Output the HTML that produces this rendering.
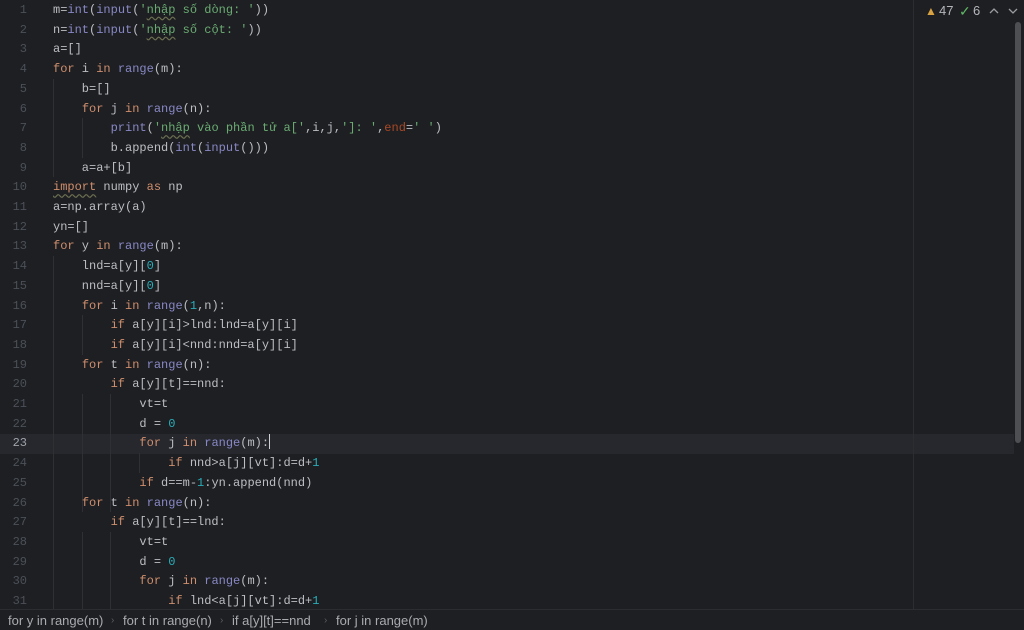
<!DOCTYPE html>
<html><head><meta charset="utf-8"><style>
html,body{margin:0;padding:0;width:1024px;height:630px;overflow:hidden;background:#1e1f22;}
body{position:relative;font-family:"Liberation Mono","DejaVu Sans Mono",monospace;font-size:12px;}
.cur{position:absolute;left:0;top:434px;width:1014px;height:19.7px;background:#26282e;}
.ln{position:absolute;left:0;top:1px;width:27px;text-align:right;color:#4b5059;line-height:19.7px;}
.ln div.c{color:#a1a3ab;}
.code{position:absolute;left:53px;top:1px;color:#bcbec4;line-height:19.7px;white-space:pre;}
.k{color:#cf8e6d}.b{color:#8888c6}.s{color:#6aab73}.n{color:#2aacb8}.p{color:#aa4926}
.u{text-decoration:underline wavy #6b6e50;text-underline-offset:3px;}
.guide{position:absolute;width:1px;background:#2e3034;}
.vline{position:absolute;left:913px;top:0;width:1px;height:609px;background:#2b2d30;}
.sb{position:absolute;left:1015px;top:22px;width:6px;height:421px;background:#4d4f53;border-radius:3px;}
.crumb{position:absolute;left:0;top:609px;width:1024px;height:21px;border-top:1px solid #2b2d30;background:#1e1f22;font-family:"Liberation Sans",sans-serif;font-size:13px;color:#a9abb0;line-height:21px;}
.crumb span{position:absolute;top:0}
.crumb i{position:absolute;top:0;font-style:normal;color:#5a5d63;font-size:10px}
.top{position:absolute;top:3px;font-family:"Liberation Sans",sans-serif;font-size:13px;color:#b4b6bb;line-height:16px}
.caret{display:inline-block;width:1px;height:15px;background:#ced0d6;vertical-align:-3px;}
</style></head><body>
<div class="cur"></div>
<div class="guide" style="left:53px;top:79px;height:98px"></div>
<div class="guide" style="left:82px;top:118px;height:40px"></div>
<div class="guide" style="left:53px;top:256px;height:353px"></div>
<div class="guide" style="left:82px;top:315px;height:40px"></div>
<div class="guide" style="left:82px;top:394px;height:118px"></div>
<div class="guide" style="left:110px;top:394px;height:118px"></div>
<div class="guide" style="left:139px;top:453px;height:20px"></div>
<div class="guide" style="left:82px;top:532px;height:77px"></div>
<div class="guide" style="left:110px;top:532px;height:77px"></div>
<div class="ln">
<div>1</div><div>2</div><div>3</div><div>4</div><div>5</div><div>6</div><div>7</div><div>8</div><div>9</div><div>10</div><div>11</div><div>12</div><div>13</div><div>14</div><div>15</div><div>16</div><div>17</div><div>18</div><div>19</div><div>20</div><div>21</div><div>22</div><div class="c">23</div><div>24</div><div>25</div><div>26</div><div>27</div><div>28</div><div>29</div><div>30</div><div>31</div>
</div>
<div class="code">m=<span class="b">int</span>(<span class="b">input</span>(<span class="s">'<span class="u">nhập</span> số dòng: '</span>))
n=<span class="b">int</span>(<span class="b">input</span>(<span class="s">'<span class="u">nhập</span> số cột: '</span>))
a=[]
<span class="k">for</span> i <span class="k">in</span> <span class="b">range</span>(m):
    b=[]
    <span class="k">for</span> j <span class="k">in</span> <span class="b">range</span>(n):
        <span class="b">print</span>(<span class="s">'<span class="u">nhập</span> vào phần tử a['</span>,i,j,<span class="s">']: '</span>,<span class="p">end</span>=<span class="s">' '</span>)
        b.append(<span class="b">int</span>(<span class="b">input</span>()))
    a=a+[b]
<span class="k u">import</span> numpy <span class="k">as</span> np
a=np.array(a)
yn=[]
<span class="k">for</span> y <span class="k">in</span> <span class="b">range</span>(m):
    lnd=a[y][<span class="n">0</span>]
    nnd=a[y][<span class="n">0</span>]
    <span class="k">for</span> i <span class="k">in</span> <span class="b">range</span>(<span class="n">1</span>,n):
        <span class="k">if</span> a[y][i]&gt;lnd:lnd=a[y][i]
        <span class="k">if</span> a[y][i]&lt;nnd:nnd=a[y][i]
    <span class="k">for</span> t <span class="k">in</span> <span class="b">range</span>(n):
        <span class="k">if</span> a[y][t]==nnd:
            vt=t
            d = <span class="n">0</span>
            <span class="k">for</span> j <span class="k">in</span> <span class="b">range</span>(m):<span class="caret"></span>
                <span class="k">if</span> nnd&gt;a[j][vt]:d=d+<span class="n">1</span>
            <span class="k">if</span> d==m-<span class="n">1</span>:yn.append(nnd)
    <span class="k">for</span> t <span class="k">in</span> <span class="b">range</span>(n):
        <span class="k">if</span> a[y][t]==lnd:
            vt=t
            d = <span class="n">0</span>
            <span class="k">for</span> j <span class="k">in</span> <span class="b">range</span>(m):
                <span class="k">if</span> lnd&lt;a[j][vt]:d=d+<span class="n">1</span></div>
<div class="vline"></div>
<div class="sb"></div>
<span class="top" style="left:925px;color:#d9a343;font-size:12px">&#9650;</span>
<span class="top" style="left:939px">47</span>
<span class="top" style="left:959px;color:#5fb865;font-size:14px">&#10003;</span>
<span class="top" style="left:973px">6</span>
<svg style="position:absolute;left:989px;top:7px" width="10" height="8"><path d="M1 6 L5 2 L9 6" stroke="#9a9ca1" stroke-width="1.3" fill="none"/></svg>
<svg style="position:absolute;left:1008px;top:7px" width="10" height="8"><path d="M1 2 L5 6 L9 2" stroke="#9a9ca1" stroke-width="1.3" fill="none"/></svg>
<div class="crumb"><span style="left:8px">for y in range(m)</span><i style="left:111px">›</i><span style="left:123px">for t in range(n)</span><i style="left:220px">›</i><span style="left:232px">if a[y][t]==nnd</span><i style="left:324px">›</i><span style="left:336px">for j in range(m)</span></div>
</body></html>
